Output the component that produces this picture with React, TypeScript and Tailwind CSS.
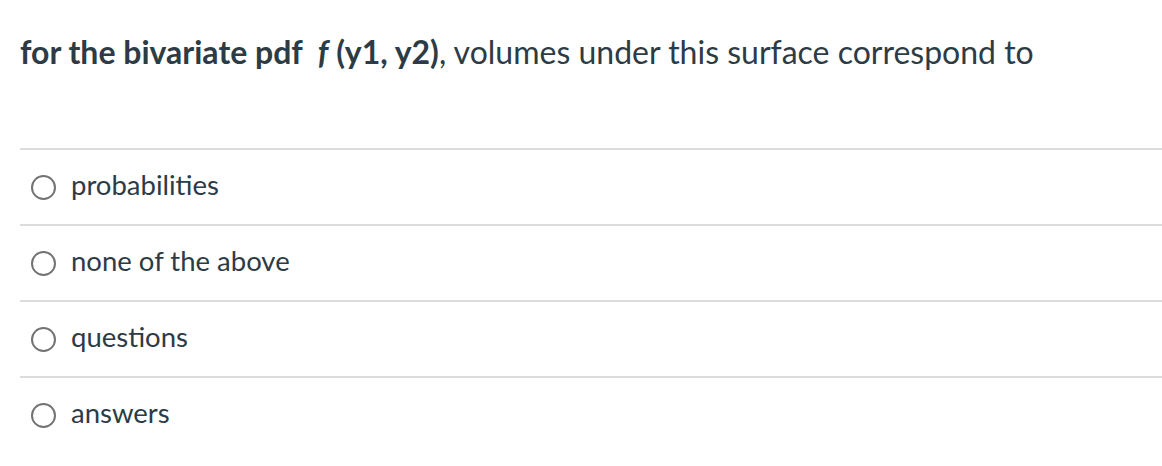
export default function App() {
  const options = ["probabilities", "none of the above", "questions", "answers"];
  return (
    <div className="w-[1162px] h-[466px] bg-white text-[#2d3b45] font-['Lato','Noto_Sans',sans-serif]">
      <div className="pl-5 pt-[32px]">
        <p className="text-[32px] leading-[40px]">
          <strong className="font-bold">
            for the bivariate pdf&nbsp; <em className="italic">f</em> (y1, y2)
          </strong>
          , volumes under this surface correspond to
        </p>
      </div>
      <div className="ml-5 mt-[76px]">
        {options.map((o) => (
          <div key={o} className="h-[76px] border-t-2 border-[#dcdcdc] flex items-center">
            <span className="ml-[11px] w-[25px] h-[25px] rounded-full border-2 border-[#737373] bg-white shrink-0" />
            <span className="ml-[15px] pb-1 text-[27.5px] leading-none">{o}</span>
          </div>
        ))}
      </div>
    </div>
  );
}
